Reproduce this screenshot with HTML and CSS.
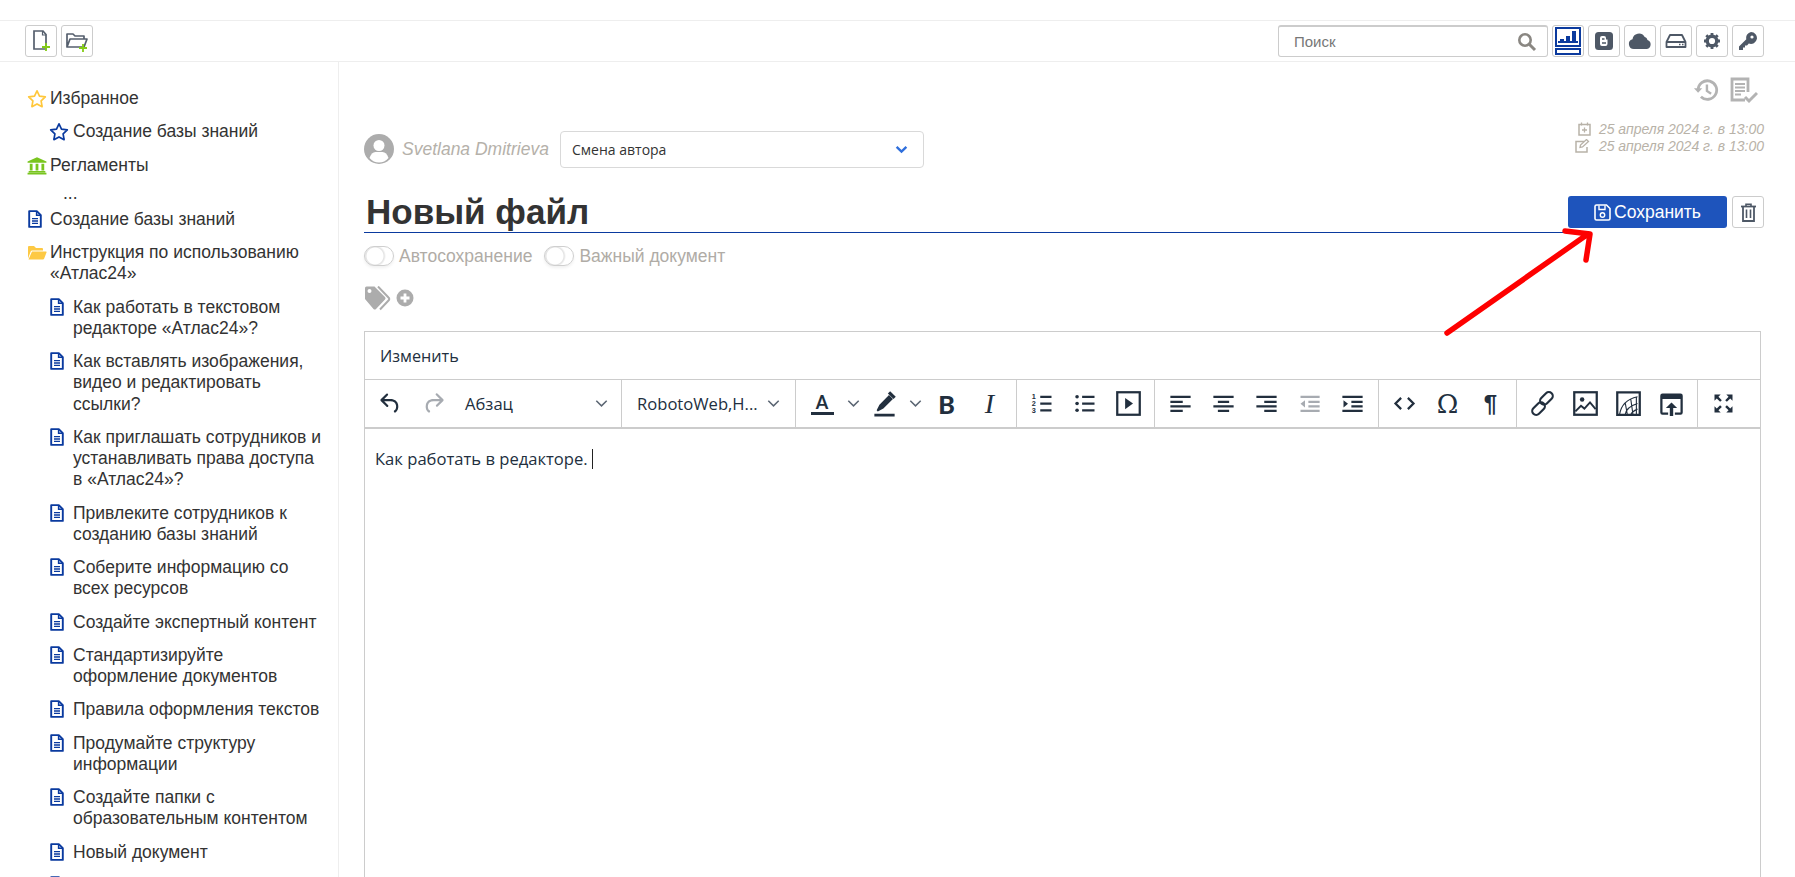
FILE: index.html
```html
<!DOCTYPE html>
<html lang="ru">
<head>
<meta charset="utf-8">
<title>Новый файл</title>
<link rel="stylesheet" href="styles.css">
</head>
<body>
<svg class="defs" width="0" height="0" aria-hidden="true">
  <symbol id="doc" viewBox="0 0 14 18">
    <path d="M1.2 1.1h7.6l4 4v11.8H1.2z" fill="none" stroke="currentColor" stroke-width="1.9" stroke-linejoin="round"/>
    <path d="M8.6 1.1v4.2h4.2" fill="none" stroke="currentColor" stroke-width="1.5"/>
    <path d="M4 8.6h6M4 11h6M4 13.4h6" stroke="currentColor" stroke-width="1.4"/>
  </symbol>
  <symbol id="star" viewBox="0 0 20 19">
    <path d="M10 1.8l2.5 5.3 5.8.8-4.2 4 1 5.8-5.1-2.8-5.1 2.8 1-5.8-4.2-4 5.8-.8z" fill="none" stroke="currentColor" stroke-width="1.7" stroke-linejoin="round"/>
  </symbol>
  <symbol id="chev" viewBox="0 0 12 8">
    <path d="M1.2 1.5L6 6.2l4.8-4.7" fill="none" stroke="currentColor" stroke-width="1.4"/>
  </symbol>
</svg>

<header class="topbar">
  <div class="top-left">
    <button class="tb">
      <svg width="20" height="24" viewBox="0 0 20 24"><path d="M3 2h9l3 3.500V20H3z" fill="none" stroke="#555f6d" stroke-width="1.700"/><path d="M11.500 2v4H15" fill="none" stroke="#555f6d" stroke-width="1.200"/><path d="M15 14v8M11 18h8" stroke="#84cc16" stroke-width="1.800"/></svg>
    </button>
    <button class="tb">
      <svg width="24" height="24" viewBox="0 0 24 24"><path d="M2 18V5h6l2 2h9v3M2 18l3-8h17l-3 8z" fill="none" stroke="#555f6d" stroke-width="1.700" stroke-linejoin="round"/><path d="M18 15v8M14 19h8" stroke="#84cc16" stroke-width="1.800"/></svg>
    </button>
  </div>
  <div class="top-right">
    <div class="search">
      <span class="search-label">Поиск</span>
      <svg width="20" height="20" viewBox="0 0 20 20"><circle cx="8" cy="8" r="5.700" fill="none" stroke="#8a8782" stroke-width="2.600"/><path d="M12.500 12.500l5.500 5.500" stroke="#8a8782" stroke-width="3"/></svg>
    </div>
    <button class="tb active">
      <svg width="26" height="28" viewBox="0 0 26 28"><rect x="1" y="1" width="24" height="18" fill="none" stroke="#0b3a9e" stroke-width="2"/><path d="M3 15h20" stroke="#0b3a9e" stroke-width="2"/><path d="M7 14v-2M13 14v-5M19 14V4" stroke="#0b3a9e" stroke-width="4"/><rect x="1" y="22" width="24" height="5" fill="none" stroke="#0b3a9e" stroke-width="2"/></svg>
    </button>
    <button class="tb">
      <svg width="20" height="20" viewBox="0 0 20 20"><rect x="1" y="1" width="18" height="18" rx="3.500" fill="#4e5866"/><path d="M6 9V7q0-2 2-2h2q2 0 2 2v1.500h1.500V13q0 2-2 2H8q-2 0-2-2z" fill="#fff"/><path d="M8 8h2.500M8 12h4" stroke="#4e5866" stroke-width="1.300"/></svg>
    </button>
    <button class="tb">
      <svg width="24" height="18" viewBox="0 0 24 18"><path d="M6 17a5 5 0 0 1-1.500-9.800A6.500 6.500 0 0 1 16.500 4.700 4 4 0 0 1 19.500 8 4.700 4.700 0 0 1 19 17z" fill="#4e5866"/></svg>
    </button>
    <button class="tb">
      <svg width="22" height="16" viewBox="0 0 22 16"><path d="M1.500 9L5 2h12l3.500 7v5h-19zM1.500 9h19" fill="none" stroke="#4e5866" stroke-width="1.800" stroke-linejoin="round"/><path d="M14 11.500h1.500M17 11.500h1.500" stroke="#4e5866" stroke-width="1.600"/></svg>
    </button>
    <button class="tb">
      <svg width="18" height="18" viewBox="0 0 18 18"><circle cx="9" cy="9" r="4.800" fill="none" stroke="#4e5866" stroke-width="3.400"/><path d="M9 1v3M9 14v3M1 9h3M14 9h3M3.300 3.300l2.200 2.200M12.500 12.500l2.200 2.200M14.700 3.300l-2.200 2.200M5.500 12.500l-2.200 2.200" stroke="#4e5866" stroke-width="2.800"/></svg>
    </button>
    <button class="tb">
      <svg width="20" height="20" viewBox="0 0 20 20"><path d="M13 1a6 6 0 1 1-2.200 11.600L9 14.500H7v2H5v2.500H1v-3.500l7.300-7.300A6 6 0 0 1 13 1z" fill="#4e5866"/><circle cx="14" cy="6" r="1.600" fill="#fff"/></svg>
    </button>
  </div>
</header>

<div class="layout">
  <nav class="sidebar">
    <ul class="tree">
      <li class="node"><svg class="ic gold"><use href="#star"/></svg><span>Избранное</span></li>
      <li class="node sub"><svg class="ic blue"><use href="#star"/></svg><span>Создание базы знаний</span></li>
      <li class="node"><svg class="ic" viewBox="0 0 18 16"><path d="M9 0.500L17.500 4.500v1H.500v-1z M2.500 6.500h2.500v6H2.500z M7.750 6.500h2.500v6h-2.500z M13 6.500h2.500v6H13z M1.500 13h15v1.200h-15z M.500 14.500h17V16H.500z" fill="#79c51f"/></svg><span>Регламенты</span></li>
      <li class="dots">...</li>
      <li class="node"><svg class="ic-doc blue"><use href="#doc"/></svg><span>Создание базы знаний</span></li>
      <li class="node"><svg class="ic gold" viewBox="0 0 20 16"><path d="M1 14V2.500q0-1 1-1h5l2 2h6q1 0 1 1V6H5q-.8 0-1.200.8zM5 7h14q.8 0 .6.800l-2.500 6.400q-.3.800-1.100.800H1.500z" fill="#fdc944"/></svg><span>Инструкция по использованию<br>«Атлас24»</span></li>
      <li class="node sub"><svg class="ic-doc blue"><use href="#doc"/></svg><span>Как работать в текстовом<br>редакторе «Атлас24»?</span></li>
      <li class="node sub"><svg class="ic-doc blue"><use href="#doc"/></svg><span>Как вставлять изображения,<br>видео и редактировать<br>ссылки?</span></li>
      <li class="node sub"><svg class="ic-doc blue"><use href="#doc"/></svg><span>Как приглашать сотрудников и<br>устанавливать права доступа<br>в «Атлас24»?</span></li>
      <li class="node sub"><svg class="ic-doc blue"><use href="#doc"/></svg><span>Привлеките сотрудников к<br>созданию базы знаний</span></li>
      <li class="node sub"><svg class="ic-doc blue"><use href="#doc"/></svg><span>Соберите информацию со<br>всех ресурсов</span></li>
      <li class="node sub"><svg class="ic-doc blue"><use href="#doc"/></svg><span>Создайте экспертный контент</span></li>
      <li class="node sub"><svg class="ic-doc blue"><use href="#doc"/></svg><span>Стандартизируйте<br>оформление документов</span></li>
      <li class="node sub"><svg class="ic-doc blue"><use href="#doc"/></svg><span>Правила оформления текстов</span></li>
      <li class="node sub"><svg class="ic-doc blue"><use href="#doc"/></svg><span>Продумайте структуру<br>информации</span></li>
      <li class="node sub"><svg class="ic-doc blue"><use href="#doc"/></svg><span>Создайте папки с<br>образовательным контентом</span></li>
      <li class="node sub"><svg class="ic-doc blue"><use href="#doc"/></svg><span>Новый документ</span></li>
      <li class="node sub"><svg class="ic-doc blue"><use href="#doc"/></svg><span></span></li>
    </ul>
  </nav>

  <main class="main">
    <div class="actions">
      <svg width="26" height="26" viewBox="0 0 28 26"><path d="M5.500 13a10 10 0 1 1 3 7.200" fill="none" stroke="#b3b3b3" stroke-width="3"/><path d="M1 11l4.500 5 4.500-5z" fill="#b3b3b3"/><path d="M15 7v7l4.500 3" fill="none" stroke="#b3b3b3" stroke-width="2.600"/></svg>
      <svg width="28" height="27" viewBox="0 0 28 27"><path d="M15 23H2V2h16v13" fill="none" stroke="#b3b3b3" stroke-width="2.800"/><path d="M5 7h10M5 10.500h10M5 14h10M5 17.500h6" stroke="#b3b3b3" stroke-width="2"/><path d="M15 20l4 4 8-8" fill="none" stroke="#b3b3b3" stroke-width="3"/></svg>
    </div>

    <div class="meta">
      <div class="author">
        <svg class="avatar" width="30" height="30" viewBox="0 0 30 30"><circle cx="15" cy="15" r="15" fill="#acacac"/><circle cx="15" cy="11.500" r="5.500" fill="#fff"/><path d="M5.500 24q2-6 6-6h7q4 0 6 6-4 4.500-9.500 4.500T5.500 24z" fill="#fff"/></svg>
        <span class="author-name">Svetlana Dmitrieva</span>
      </div>
      <div class="select">
        <span>Смена автора</span>
        <svg width="13" height="9" viewBox="0 0 12 8"><path d="M1.500 1.500L6 6l4.500-4.500" fill="none" stroke="#2f6fdc" stroke-width="2.200"/></svg>
      </div>
      <div class="dates">
        <div class="date-line">
          <svg width="13" height="14" viewBox="0 0 13 14"><rect x="1" y="2.500" width="11" height="10.500" fill="none" stroke="#b8b2a8" stroke-width="1.500"/><path d="M3.500 0.500v3M9.500 0.500v3M4 8h5M6.500 5.500v5" stroke="#b8b2a8" stroke-width="1.300"/></svg>
          <span>25 апреля 2024 г. в 13:00</span>
        </div>
        <div class="date-line">
          <svg width="16" height="14" viewBox="0 0 16 14"><path d="M9 2.500H1V13h11V8" fill="none" stroke="#b8b2a8" stroke-width="1.500"/><path d="M5 8.500l.5-2.500 6-5.500 2 2-6 5.500z" fill="none" stroke="#b8b2a8" stroke-width="1.300"/></svg>
          <span>25 апреля 2024 г. в 13:00</span>
        </div>
      </div>
    </div>

    <div class="title-row">
      <div class="title">Новый файл</div>
      <button class="save">
        <svg width="17" height="17" viewBox="0 0 17 17"><path d="M2.500 1h10l3.500 3.500V14.500q0 1.500-1.500 1.500h-12Q1 16 1 14.500v-12Q1 1 2.500 1z" fill="none" stroke="#fff" stroke-width="1.600"/><path d="M5 1.500v4h6v-4" fill="none" stroke="#fff" stroke-width="1.400"/><circle cx="8.500" cy="11" r="2.200" fill="none" stroke="#fff" stroke-width="1.400"/></svg>
        <span>Сохранить</span>
      </button>
      <button class="tb trash">
        <svg width="15" height="19" viewBox="0 0 15 19"><path d="M0 3.500h15" stroke="#4e5866" stroke-width="1.800"/><path d="M5 3V1.200h5V3" fill="none" stroke="#4e5866" stroke-width="1.600"/><path d="M2 3.500V18h11V3.500" fill="none" stroke="#4e5866" stroke-width="1.800"/><path d="M5.500 6.500v8.500M9.500 6.500v8.500" stroke="#4e5866" stroke-width="1.600"/></svg>
      </button>
    </div>

    <div class="toggles">
      <span class="switch"></span><span class="toggle-label">Автосохранение</span>
      <span class="switch"></span><span class="toggle-label">Важный документ</span>
    </div>

    <div class="tags">
      <svg width="28" height="25" viewBox="0 0 28 25"><path d="M1 2q0-1.500 1.500-1.500h8L21 11q1.200 1.200 0 2.500L12 23q-1.200 1.200-2.500 0L1 13z" fill="#acacac"/><circle cx="5.500" cy="5" r="2" fill="#fff"/><path d="M14 .5l10.500 11q1.500 1.500 0 3L16 23.500" fill="none" stroke="#acacac" stroke-width="2"/></svg>
      <svg width="18" height="18" viewBox="0 0 18 18"><circle cx="9" cy="9" r="8.500" fill="#acacac"/><path d="M9 4.500v9M4.500 9h9" stroke="#fff" stroke-width="2.800"/></svg>
    </div>

    <section class="editor">
      <div class="menubar">Изменить</div>
      <div class="toolbar">
        <div class="group">
          <span class="btn"><svg class="ti" viewBox="0 0 24 24"><path d="M6.400 8H12c3.700 0 6.200 2 6.800 5.100.6 2.700-.4 5.600-2.300 6.800a1 1 0 0 1-1-1.800c1.100-.6 1.800-2.700 1.400-4.600-.5-2.100-2.100-3.500-4.900-3.500H6.400l3.300 3.300a1 1 0 1 1-1.400 1.400l-5-5a1 1 0 0 1 0-1.400l5-5a1 1 0 0 1 1.400 1.400L6.400 8Z"/></svg></span>
          <span class="btn off"><svg class="ti" viewBox="0 0 24 24"><path d="M17.600 10H12c-2.800 0-4.400 1.400-4.900 3.500-.4 2 .3 4 1.400 4.600a1 1 0 1 1-1 1.800c-2-1.200-2.900-4.100-2.300-6.800.6-3 3-5.100 6.800-5.100h5.600l-3.300-3.300a1 1 0 1 1 1.400-1.400l5 5a1 1 0 0 1 0 1.400l-5 5a1 1 0 0 1-1.400-1.400l3.300-3.300Z"/></svg></span>
          <span class="drop para"><span>Абзац</span><svg class="chev"><use href="#chev"/></svg></span>
        </div>
        <div class="group">
          <span class="drop font"><span>RobotoWeb,H...</span><svg class="chev"><use href="#chev"/></svg></span>
        </div>
        <div class="group pad5">
          <span class="btn split"><span class="glyph-a">A</span></span>
          <span class="arrowbtn"><svg class="chev"><use href="#chev"/></svg></span>
          <span class="btn split"><svg class="ti" viewBox="0 0 24 24"><path d="M3 21h18v2.500H3zM5 18l2.500-5L16 4.500l3.500 3.500-8.500 8.500-5 2.500z"/><path d="M15 3l2-2 5 5-2 2z"/></svg></span>
          <span class="arrowbtn"><svg class="chev"><use href="#chev"/></svg></span>
          <span class="btn glyph-b">B</span>
          <span class="btn glyph-i">I</span>
        </div>
        <div class="group">
          <span class="btn"><svg class="ti" viewBox="0 0 24 24"><path d="M10 6h10M10 12h10M10 18h10" class="ln"/><text x="2.500" y="8" class="num">1</text><text x="2.500" y="14" class="num">2</text><text x="2.500" y="20" class="num">3</text></svg></span>
          <span class="btn"><svg class="ti" viewBox="0 0 24 24"><path d="M9 6h11M9 12h11M9 18h11" class="ln"/><circle cx="4.500" cy="6" r="1.600"/><circle cx="4.500" cy="12" r="1.600"/><circle cx="4.500" cy="18" r="1.600"/></svg></span>
          <span class="btn"><svg class="ti" viewBox="0 0 24 24"><rect x="2" y="2" width="20" height="20" fill="none" stroke="currentColor" stroke-width="2"/><path d="M9 7l7 5-7 5z"/></svg></span>
        </div>
        <div class="group">
          <span class="btn"><svg class="ti" viewBox="0 0 24 24"><path d="M3 6h18M3 10.500h11M3 14.500h18M3 18.500h11" class="ln"/></svg></span>
          <span class="btn"><svg class="ti" viewBox="0 0 24 24"><path d="M3 6h18M7 10.500h10M3 14.500h18M7 18.500h10" class="ln"/></svg></span>
          <span class="btn"><svg class="ti" viewBox="0 0 24 24"><path d="M3 6h18M10 10.500h11M3 14.500h18M10 18.500h11" class="ln"/></svg></span>
          <span class="btn off"><svg class="ti" viewBox="0 0 24 24"><path d="M4 6h17M11 10.500h10M11 14.500h10M4 18.500h17" class="ln"/><path d="M8 9v6.500l-4-3.200z"/></svg></span>
          <span class="btn"><svg class="ti" viewBox="0 0 24 24"><path d="M3 6h18M11 10.500h10M11 14.500h10M3 18.500h18" class="ln"/><path d="M4 9v6.500l4-3.200z"/></svg></span>
        </div>
        <div class="group">
          <span class="btn"><svg class="ti" viewBox="0 0 24 24"><path d="M9 7l-5 5 5 5M15 7l5 5-5 5" fill="none" stroke="currentColor" stroke-width="2"/></svg></span>
          <span class="btn glyph-o">Ω</span>
          <span class="btn glyph-p">¶</span>
        </div>
        <div class="group">
          <span class="btn"><svg class="ti" viewBox="0 0 24 24"><g fill="none" stroke="currentColor" stroke-width="1.900"><rect x="12" y="1" width="7" height="13" rx="3.500" transform="rotate(45 15.500 7.500)"/><rect x="5" y="10" width="7" height="13" rx="3.500" transform="rotate(45 8.500 16.500)"/></g></svg></span>
          <span class="btn"><svg class="ti" viewBox="0 0 24 24"><rect x="2" y="2" width="20" height="20" fill="none" stroke="currentColor" stroke-width="2"/><circle cx="9" cy="8.500" r="2"/><path d="M3 19l5-5 3 2.500 5-5.500 5 6" fill="none" stroke="currentColor" stroke-width="1.700"/></svg></span>
          <span class="btn"><svg class="ti" viewBox="0 0 24 24"><path d="M2 2h20v20H2z" fill="none" stroke="currentColor" stroke-width="2"/><path d="M4 22Q6 9 20 6M9 22q1-7 11-10M14 22q1-3 6-5M9 11l2 11M14 8l2 14M19 6v16" fill="none" stroke="currentColor" stroke-width="1"/></svg></span>
          <span class="btn"><svg class="ti" viewBox="0 0 24 24"><path d="M2 5q0-2 2-2h16q2 0 2 2v15q0 2-2 2h-5v-2h5V8H4v12h5v2H4q-2 0-2-2z"/><path d="M12 11l5 5h-3.500v7h-3v-7H7z"/></svg></span>
        </div>
        <div class="group last">
          <span class="btn"><svg class="ti" viewBox="0 0 24 24"><path d="M4 4h5.500l-2 2 3 3-1.500 1.500-3-3-2 2zM20 4v5.500l-2-2-3 3L13.500 9l3-3-2-2zM4 20v-5.500l2 2 3-3 1.500 1.500-3 3 2 2zM20 20h-5.500l2-2-3-3 1.500-1.500 3 3 2-2z"/></svg></span>
        </div>
      </div>
      <div class="content">Как работать в редакторе. <span class="caret"></span></div>
    </section>
  </main>
</div>

<svg class="pointer" width="160" height="120" viewBox="0 0 160 120" aria-hidden="true">
  <path d="M5 107L146 8M123 5l25 3-4 26" fill="none" stroke="#fe0000" stroke-width="5.500" stroke-linecap="round" stroke-linejoin="round"/>
</svg>
</body>
</html>
```
FILE: styles.css
```css
* { box-sizing: border-box; }
html, body { margin: 0; height: 100%; overflow: hidden; background: #fff; }
body { font-family: "Liberation Sans", Arial, sans-serif; color: #333; position: relative; }
.defs { position: absolute; }

.topbar {
  margin-top: 20px;
  height: 42px;
  border-top: 1px solid #eeeeee;
  border-bottom: 1px solid #eeeeee;
  display: flex;
  justify-content: space-between;
  align-items: center;
  padding: 0 31px 0 25px;
}
.top-left, .top-right { display: flex; gap: 4px; align-items: center; }
.tb {
  width: 32px;
  height: 32px;
  padding: 0;
  background: #fff;
  border: 1px solid #cccccc;
  border-radius: 3px;
  display: flex;
  align-items: center;
  justify-content: center;
}
.tb.active { border-color: #c8c8c8; }
.search {
  width: 270px;
  height: 32px;
  border: 1px solid #ccc;
  border-top-width: 2px;
  border-radius: 3px;
  display: flex;
  align-items: center;
  justify-content: space-between;
  padding: 0 10px 0 15px;
}
.search-label { font-size: 15px; color: #777; }

.layout { display: flex; height: calc(100vh - 62px); }
.sidebar {
  width: 339px;
  flex: none;
  border-right: 1px solid #eeeeee;
  overflow: hidden;
  padding: 26px 0 0 28px;
}
.tree { list-style: none; margin: 0; padding: 0; font-size: 17.500px; line-height: 21.250px; color: #333; }
.node { display: flex; margin-bottom: 12px; align-items: flex-start; }
.node.sub { padding-left: 22px; }
.ic { width: 20px; height: 19px; flex: none; margin: 1px 3px 0 -1px; }
.sub .ic { margin-right: 4px; }
.ic-doc { width: 14px; height: 18px; flex: none; margin: 1px 8px 0 0; }
.sub .ic-doc { margin-right: 9px; }
.gold { color: #ffc73b; }
.blue { color: #0a3a9f; }
.dots { padding-left: 35px; height: 10px; margin-bottom: 11px; line-height: 10px; }

.main { flex: 1; min-width: 0; overflow: hidden; padding: 15px 31px 0 25px; }
.actions { display: flex; justify-content: flex-end; align-items: flex-start; gap: 11px; height: 27px; margin-right: 6px; }
.meta { display: flex; margin-top: 17px; height: 47px; align-items: flex-start; }
.author { display: flex; align-items: center; gap: 8px; margin-top: 13px; width: 196px; }
.author-name { font-size: 17.500px; font-style: italic; color: #b5b1aa; white-space: nowrap; }
.select {
  width: 364px;
  height: 37px;
  margin-top: 10px;
  border: 1px solid #d9d9d9;
  border-radius: 4px;
  display: flex;
  align-items: center;
  justify-content: space-between;
  padding: 0 15px 0 11px;
  font-family: "Open Sans", sans-serif;
  font-size: 14px;
  color: #333;
}
.dates { margin-left: auto; font-size: 14px; font-style: italic; color: #b8b2a8; line-height: 16.500px; }
.date-line { display: flex; align-items: center; gap: 8px; justify-content: flex-end; }

.title-row { display: flex; margin-top: 28px; height: 37px; align-items: flex-start; }
.title {
  flex: 1;
  height: 37px;
  border-bottom: 1.500px solid #0a3a9f;
  font-size: 35px;
  font-weight: 700;
  line-height: 32px;
  padding-left: 2px;
  color: #333;
  margin-right: 4px;
}
.save {
  width: 159px;
  height: 32px;
  background: #1e54bc;
  border: 0;
  border-radius: 3px;
  color: #fff;
  font-family: "Liberation Sans", sans-serif;
  font-size: 17.500px;
  display: flex;
  align-items: center;
  justify-content: center;
  gap: 3px;
}
.trash { margin-left: 5px; }

.toggles { display: flex; align-items: center; margin-top: 13px; height: 20px; }
.switch {
  width: 30px;
  height: 20px;
  border: 1px solid #cfcfcf;
  border-radius: 10px;
  background: radial-gradient(circle at 10px 9px, #fff 8px, #e2e2e2 9px, #fff 11px);
  box-shadow: 0 2px 3px rgba(0,0,0,.06);
}
.toggle-label { font-size: 17.500px; color: #b0aca6; margin: 0 12px 0 5px; }

.tags { display: flex; align-items: center; gap: 4px; margin-top: 21px; height: 22px; }

.editor { margin-top: 22px; margin-right: 3px; height: 700px; border: 1px solid #cccccc; font-family: "Open Sans", sans-serif; color: #222f3e; }
.menubar { height: 47px; padding: 14px 0 0 15px; font-size: 16.200px; line-height: 20px; }
.toolbar { display: flex; height: 50px; border-top: 1px solid #ccc; border-bottom: 2px solid #ccc; }
.group { display: flex; align-items: center; padding: 0 4px; border-right: 1px solid #ccc; }
.group.pad5 { padding: 0 5px; }
.group.last { border-right: 0; }
.btn { width: 43px; height: 34px; display: flex; align-items: center; justify-content: center; color: #222f3e; }
.btn.off { color: #a7abb1; }
.btn.split { width: 42px; }
.arrowbtn { width: 20px; height: 34px; display: flex; align-items: center; justify-content: center; color: #5a6572; }
.ti { width: 27px; height: 27px; fill: currentColor; }
.ln { stroke: currentColor; stroke-width: 2; fill: none; }
.num { font: 700 6.500px "Liberation Sans", sans-serif; fill: currentColor; }
.chev { width: 13px; height: 9px; flex: none; color: #5a6572; }
.drop { display: flex; align-items: center; justify-content: space-between; font-size: 16.600px; }
.para { width: 162px; padding: 0 9px 0 10px; }
.font { width: 165px; padding: 0 11px; }
.glyph-a {
  font-family: "Lato", sans-serif;
  font-size: 18px;
  font-weight: 700;
  line-height: 19px;
  width: 23px;
  text-align: center;
  border-bottom: 3px solid #222f3e;
}
.glyph-b { font-family: "Lato", sans-serif; font-weight: 900; font-size: 25px; }
.glyph-i { font-family: "Liberation Serif", serif; font-style: italic; font-size: 28px; }
.glyph-o { font-family: "DejaVu Serif", serif; font-size: 26px; }
.glyph-p { font-family: "Liberation Sans", sans-serif; font-weight: 700; font-size: 24px; }
.content { padding: 18px 10px; font-size: 16.600px; line-height: 24px; color: #222f3e; }
.caret { display: inline-block; width: 1px; height: 20px; background: #222; vertical-align: -4px; }

.pointer { position: absolute; left: 1442px; top: 226px; pointer-events: none; }
```
